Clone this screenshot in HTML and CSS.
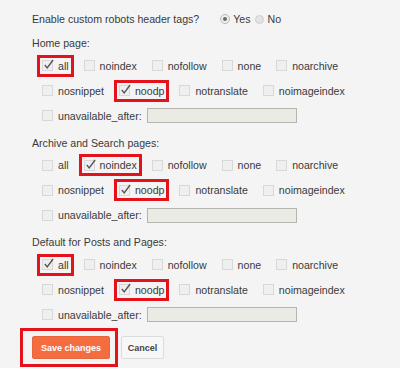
FILE: index.html
```html
<!DOCTYPE html>
<html>
<head>
<meta charset="utf-8">
<link rel="stylesheet" href="styles.css">
</head>
<body>
<div class="panel">
  <div class="q">
    <span>Enable custom robots header tags?</span>
    <span class="radios">
      <span class="radio on"></span><span class="rl">Yes</span>
      <span class="radio off"></span><span class="rl">No</span>
    </span>
  </div>

  <section class="sec">
    <div class="head">Home page:</div>
    <div class="rows">
      <div class="row">
        <span class="opt hl"><span class="cb"><svg viewBox="0 0 12 12"><path d="M2 5.5 L4.6 8.6 L11 0"/></svg></span>all</span>
        <span class="opt"><span class="cb"></span>noindex</span>
        <span class="opt"><span class="cb"></span>nofollow</span>
        <span class="opt"><span class="cb"></span>none</span>
        <span class="opt"><span class="cb"></span>noarchive</span>
      </div>
      <div class="row">
        <span class="opt"><span class="cb"></span>nosnippet</span>
        <span class="opt hl"><span class="cb"><svg viewBox="0 0 12 12"><path d="M2 5.5 L4.6 8.6 L11 0"/></svg></span>noodp</span>
        <span class="opt"><span class="cb"></span>notranslate</span>
        <span class="opt"><span class="cb"></span>noimageindex</span>
      </div>
      <div class="row">
        <span class="opt"><span class="cb"></span>unavailable_after:<span class="inp"></span></span>
      </div>
    </div>
  </section>

  <section class="sec">
    <div class="head">Archive and Search pages:</div>
    <div class="rows">
      <div class="row">
        <span class="opt"><span class="cb"></span>all</span>
        <span class="opt hl"><span class="cb"><svg viewBox="0 0 12 12"><path d="M2 5.5 L4.6 8.6 L11 0"/></svg></span>noindex</span>
        <span class="opt"><span class="cb"></span>nofollow</span>
        <span class="opt"><span class="cb"></span>none</span>
        <span class="opt"><span class="cb"></span>noarchive</span>
      </div>
      <div class="row">
        <span class="opt"><span class="cb"></span>nosnippet</span>
        <span class="opt hl"><span class="cb"><svg viewBox="0 0 12 12"><path d="M2 5.5 L4.6 8.6 L11 0"/></svg></span>noodp</span>
        <span class="opt"><span class="cb"></span>notranslate</span>
        <span class="opt"><span class="cb"></span>noimageindex</span>
      </div>
      <div class="row">
        <span class="opt"><span class="cb"></span>unavailable_after:<span class="inp"></span></span>
      </div>
    </div>
  </section>

  <section class="sec">
    <div class="head">Default for Posts and Pages:</div>
    <div class="rows">
      <div class="row">
        <span class="opt hl"><span class="cb"><svg viewBox="0 0 12 12"><path d="M2 5.5 L4.6 8.6 L11 0"/></svg></span>all</span>
        <span class="opt"><span class="cb"></span>noindex</span>
        <span class="opt"><span class="cb"></span>nofollow</span>
        <span class="opt"><span class="cb"></span>none</span>
        <span class="opt"><span class="cb"></span>noarchive</span>
      </div>
      <div class="row">
        <span class="opt"><span class="cb"></span>nosnippet</span>
        <span class="opt hl"><span class="cb"><svg viewBox="0 0 12 12"><path d="M2 5.5 L4.6 8.6 L11 0"/></svg></span>noodp</span>
        <span class="opt"><span class="cb"></span>notranslate</span>
        <span class="opt"><span class="cb"></span>noimageindex</span>
      </div>
      <div class="row">
        <span class="opt"><span class="cb"></span>unavailable_after:<span class="inp"></span></span>
      </div>
    </div>
  </section>

  <div class="actions">
    <button class="btn save">Save changes</button>
    <button class="btn cancel">Cancel</button>
  </div>
</div>
</body>
</html>
```

FILE: styles.css
```css
html, body {
  margin: 0;
  background: #ffffff;
}

.panel {
  background: #f4f4f4;
  height: 368px;
  box-sizing: border-box;
  padding: 11px 0 0 32px;
  font-family: "Liberation Sans", Arial, sans-serif;
  font-size: 10.6px;
  color: #3a3a3a;
}

.q {
  display: flex;
  align-items: center;
  height: 16px;
  gap: 21px;
}

.radios {
  display: flex;
  align-items: center;
}

.radio {
  width: 10px;
  height: 10px;
  border-radius: 50%;
  box-sizing: border-box;
  position: relative;
}

.radio.on {
  border: 1px solid #b9b9b9;
  background: #eeeeee;
  margin-right: 3px;
}

.radio.on::after {
  content: "";
  position: absolute;
  left: 2px;
  top: 2px;
  width: 4px;
  height: 4px;
  border-radius: 50%;
  background: #6a6a6a;
}

.radio.off {
  width: 9px;
  height: 9px;
  border: 1px solid #cfcfcf;
  background: #e3e3e3;
  margin: 0 4px 0 4px;
}

.sec {
  margin-top: 6.5px;
}

.sec:first-of-type {
  margin-top: 8px;
}

.head {
  height: 16px;
  line-height: 16px;
  margin-bottom: 2px;
}

.rows {
  padding-left: 10px;
}

.row {
  height: 25px;
  display: flex;
  align-items: center;
  gap: 15px;
}

.opt {
  display: flex;
  align-items: center;
  gap: 5px;
  height: 12px;
  line-height: 12px;
  white-space: nowrap;
}

.hl {
  outline: 3px solid #e3121b;
  outline-offset: 2px;
}

.cb {
  width: 11px;
  height: 11px;
  box-sizing: border-box;
  border: 1px solid #d8d8d8;
  background: #efefef;
  position: relative;
  flex: none;
}

.cb svg {
  position: absolute;
  left: 0;
  top: -1px;
  width: 11px;
  height: 11px;
  overflow: visible;
}

.cb path {
  fill: none;
  stroke: #555555;
  stroke-width: 1.5;
}

.inp {
  width: 150px;
  height: 15px;
  box-sizing: border-box;
  border: 1px solid #b5b5ae;
  background: #ebebe5;
  flex: none;
}

.actions {
  display: flex;
  gap: 11px;
  margin-top: 9px;
}

.btn {
  height: 23px;
  box-sizing: border-box;
  font-family: "Liberation Sans", Arial, sans-serif;
  font-size: 9px;
  font-weight: bold;
  border-radius: 2px;
  margin: 0;
  cursor: pointer;
}

.save {
  width: 78px;
  padding: 0;
  border: 1px solid #e9653b;
  background: #f46d40;
  color: #ffffff;
  position: relative;
}

.save::after {
  content: "";
  position: absolute;
  left: -13px;
  right: -9px;
  top: -9px;
  bottom: -9px;
  border: 3px solid #e3121b;
}

.cancel {
  width: 43px;
  padding: 0;
  border: 1px solid #dcdcdc;
  background: #f7f7f7;
  color: #444444;
}
```
